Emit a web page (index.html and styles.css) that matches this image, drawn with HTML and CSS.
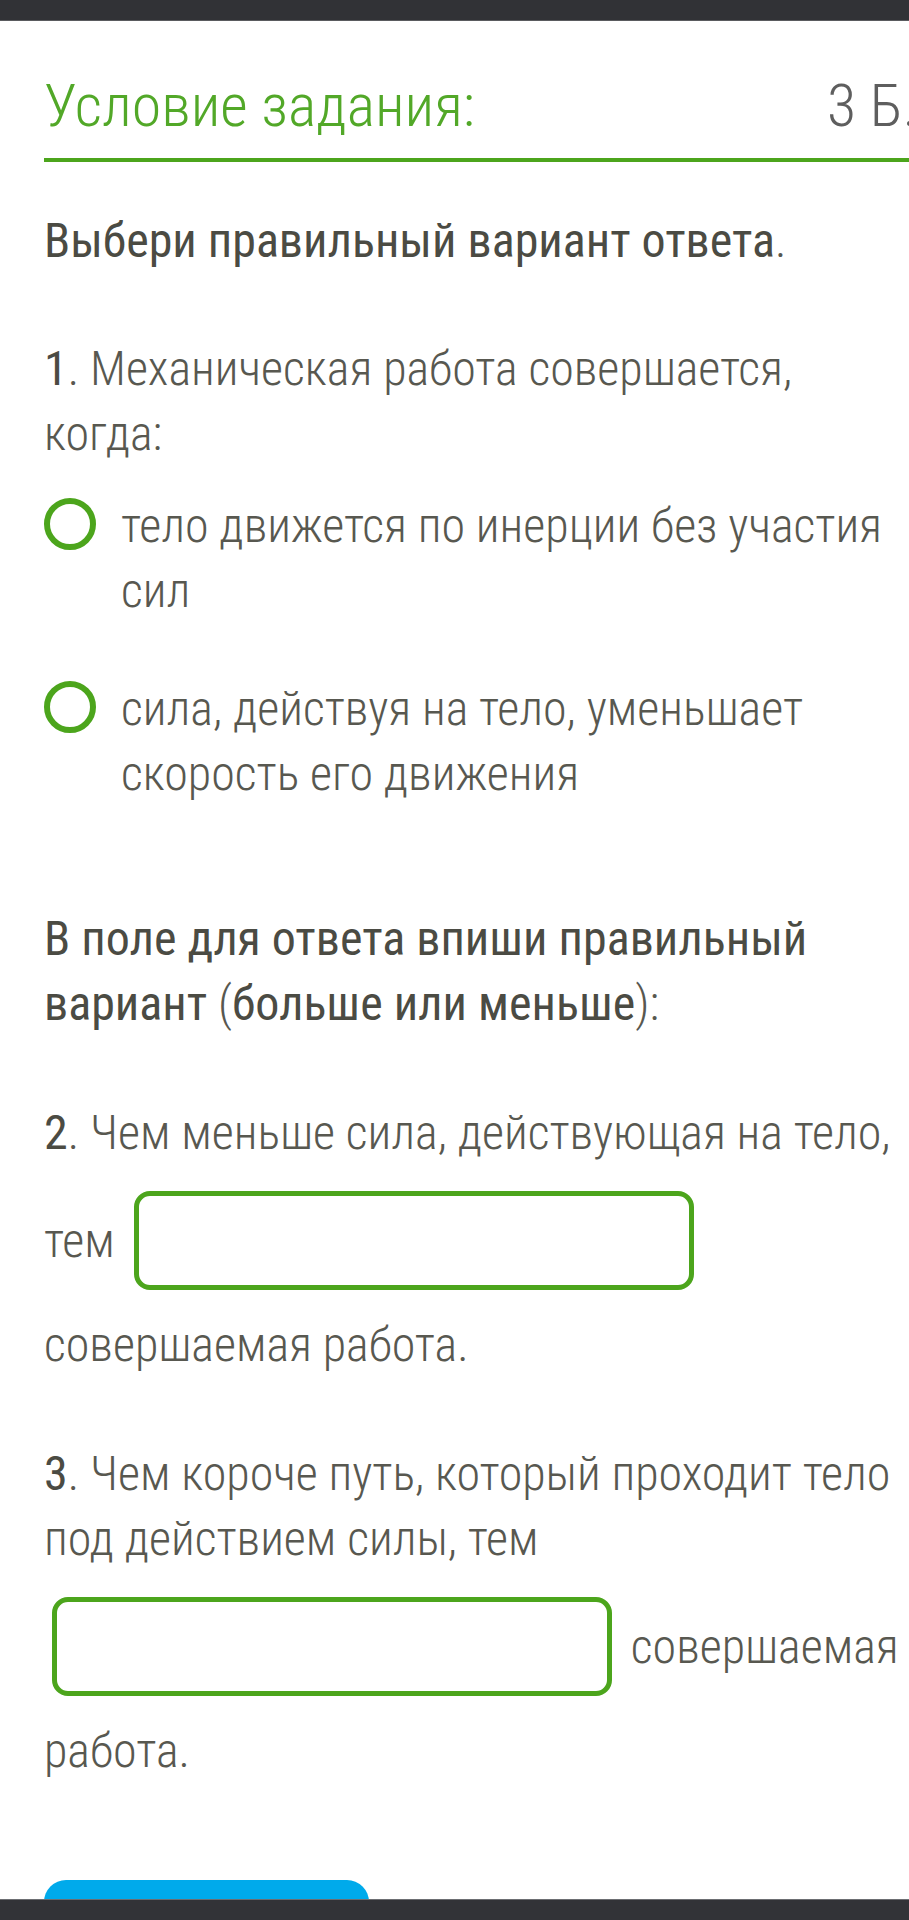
FILE: index.html
```html
<!DOCTYPE html>
<html lang="ru">
<head>
    <meta charset="UTF-8">
    <meta name="viewport" content="width=device-width, initial-scale=1.0">
    <title>Условие задания</title>
    <link rel="stylesheet" href="styles.css">
</head>
<body>
    <div class="topbar"></div>
    <div class="task">
        <div class="task-head">
            <h1>Условие задания:</h1>
            <span class="points">3 Б.</span>
        </div>

        <p class="instr"><b>Выбери правильный вариант ответа</b>.</p>

        <p class="question q-first"><b>1</b>. Механическая работа совершается, когда:</p>
        <ul class="options">
            <li><span class="radio"></span><span>тело движется по инерции без участия сил</span></li>
            <li><span class="radio"></span><span>сила, действуя на тело, уменьшает скорость его движения</span></li>
        </ul>

        <p class="instr instr-second"><b>В поле для ответа впиши правильный вариант</b> (<b>больше или меньше</b>):</p>

        <p class="question"><b>2</b>. Чем меньше сила, действующая на тело, тем <input type="text" class="answer"> совершаемая работа.</p>
        <p class="question"><b>3</b>. Чем короче путь, который проходит тело под действием силы, тем <input type="text" class="answer"> совершаемая работа.</p>

        <button class="check" aria-label="Ответить"></button>
    </div>
    <div class="bottombar"></div>
</body>
</html>
```

FILE: styles.css
```css
body { margin: 0; background: #fff; overflow-x: hidden; font-family: "Roboto Condensed", Roboto, sans-serif; font-weight: 300; color: #585850; }
.topbar { height: 20px; background: #313236; border-bottom: 1px solid #5a5b5f; }
.bottombar { position: fixed; left: 0; right: 0; bottom: 0; height: 20px; background: #323337; border-top: 1px solid #6c6e72; }
.task { width: 868px; margin: 50px 0 0 44px; font-size: 48px; line-height: 65px; }
.task-head { display: flex; justify-content: space-between; align-items: baseline; padding-bottom: 18px; border-bottom: 4px solid #4ca51c; }
h1 { margin: 0; font-size: 60px; line-height: 69px; font-weight: 300; color: #52a828; }
.points { margin-right: -5px; font-size: 60px; line-height: 69px; color: #5e5e5e; }
b { font-weight: 400; color: #4b4b43; }
p { margin: 0; }
.instr { margin-top: 46px; }
.instr-second { margin-top: 100px; }
.question { margin-top: 64px; }
.q-first { margin-top: 63px; }
.options { list-style: none; margin: 27px 0 0; padding: 0; display: flex; flex-direction: column; gap: 53px; }
.options li { display: flex; align-items: flex-start; gap: 25px; }
.radio { flex: none; width: 52px; height: 52px; box-sizing: border-box; margin-top: 5px; border: 6px solid #4ca51c; border-radius: 50%; }
.answer { width: 560px; height: 99px; box-sizing: border-box; margin: 26px 8px 22px; padding: 0 16px; border: 5px solid #4ca51c; border-radius: 16px; font: inherit; color: inherit; background: #fff; outline: none; }
.check { display: block; margin-top: 97px; width: 325px; height: 90px; border: none; border-radius: 22px; background: #00aaeb; }
```
